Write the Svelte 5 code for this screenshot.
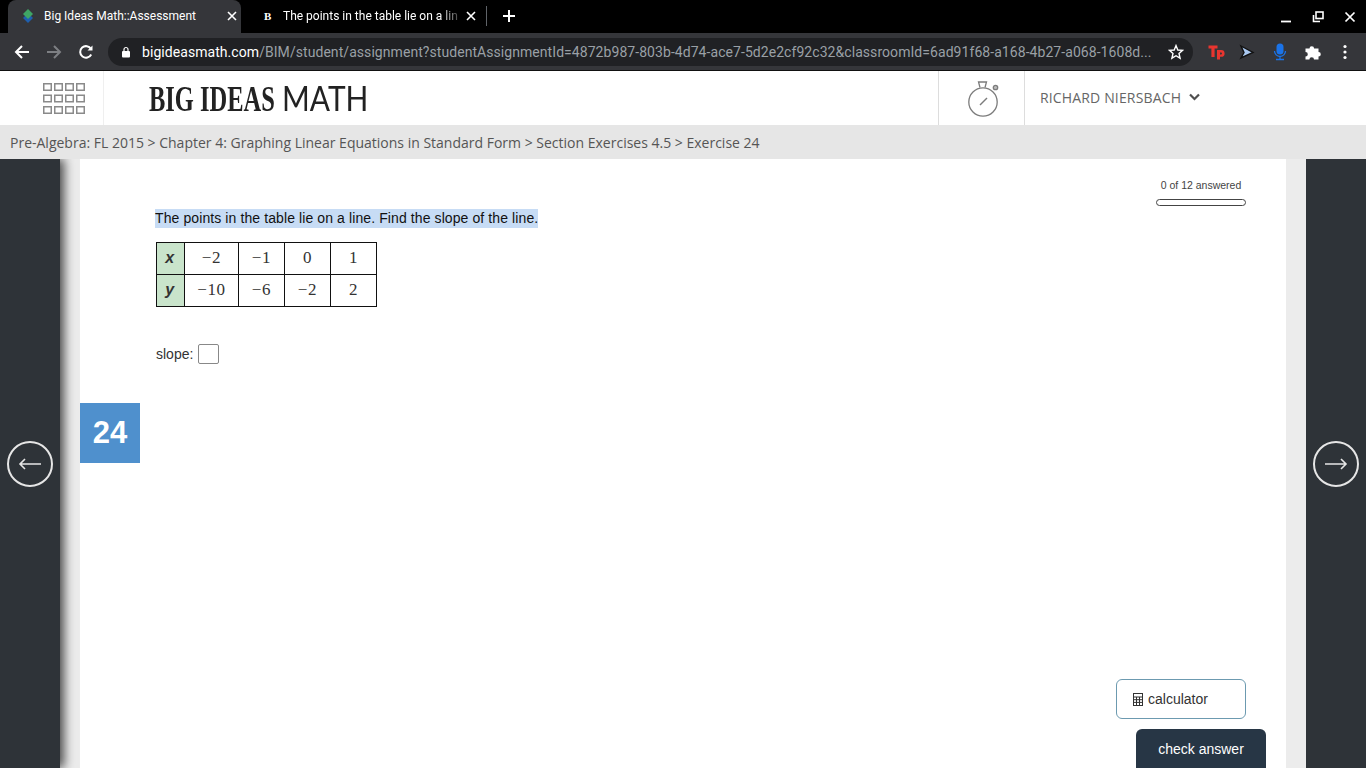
<script>
  const xs = ['−2', '−1', '0', '1'];
  const ys = ['−10', '−6', '−2', '2'];
  const squares = [];
  for (let r = 0; r < 3; r++) {
    for (let c = 0; c < 4; c++) squares.push({ x: 0.75 + c * 11, y: 0.75 + r * 11.5 });
  }
</script>

<div class="chrome">
  <div class="tabstrip">
    <div class="tab active">
      <svg class="favicon" width="16" height="16" viewBox="0 0 16 16">
        <path d="M8 5 L13 10 L8 15 L3 10Z" fill="#1f5fae" />
        <path d="M8 1 L13 6 L8 11 L3 6Z" fill="#3fa565" />
      </svg>
      <span class="tabtitle">Big Ideas Math::Assessment</span>
      <svg class="tabx" width="10" height="10" viewBox="0 0 10 10"><path d="M1 1 L9 9 M9 1 L1 9" stroke="#fff" stroke-width="1.6" /></svg>
    </div>
    <div class="tab second">
      <span class="bee">B</span>
      <span class="tabtitle fade">The points in the table lie on a lin</span>
      <svg class="tabx" width="10" height="10" viewBox="0 0 10 10"><path d="M1 1 L9 9 M9 1 L1 9" stroke="#fff" stroke-width="1.6" /></svg>
    </div>
    <div class="tabdiv"></div>
    <svg class="plus" width="12" height="12" viewBox="0 0 12 12"><path d="M6 0 V12 M0 6 H12" stroke="#fff" stroke-width="2" /></svg>
    <div class="winctl">
      <svg width="12" height="12" viewBox="0 0 12 12"><path d="M1 10.5 H11" stroke="#fff" stroke-width="1.8" /></svg>
      <svg width="12" height="12" viewBox="0 0 12 12" fill="none" stroke="#fff" stroke-width="1.6"><rect x="4" y="1" width="7" height="6.5" /><path d="M1.5 4 V10.5 H8" /></svg>
      <svg width="12" height="12" viewBox="0 0 12 12"><path d="M1.5 1.5 L10.5 10.5 M10.5 1.5 L1.5 10.5" stroke="#fff" stroke-width="1.7" /></svg>
    </div>
  </div>
  <div class="toolbar">
    <svg class="navbtn" width="16" height="16" viewBox="0 0 16 16" fill="none" stroke="#fff" stroke-width="2"><path d="M15 8 H2 M8 2 L2 8 L8 14" /></svg>
    <svg class="navbtn" width="16" height="16" viewBox="0 0 16 16" fill="none" stroke="#7d7f83" stroke-width="2"><path d="M1 8 H14 M8 2 L14 8 L8 14" /></svg>
    <svg class="navbtn" width="16" height="16" viewBox="0 0 16 16" fill="none" stroke="#fff" stroke-width="2"><path d="M13.2 10.5 A5.8 5.8 0 1 1 13 5" /><path d="M14.5 1.5 V6.5 H9.5 Z" fill="#fff" stroke="none" /></svg>
    <div class="omnibox">
      <svg width="10" height="12" viewBox="0 0 10 12"><rect x="1" y="5" width="8" height="6.5" rx="1" fill="#fff" /><path d="M3 5 V3.5 a2 2 0 0 1 4 0 V5" fill="none" stroke="#fff" stroke-width="1.2" /></svg>
      <span class="url"><b>bigideasmath.com</b>/BIM/student/assignment?studentAssignmentId=4872b987-803b-4d74-ace7-5d2e2cf92c32&amp;classroomId=6ad91f68-a168-4b27-a068-1608d...</span>
      <svg class="star" width="16" height="16" viewBox="0 0 16 16"><path d="M8 1.6 L9.8 6 L14.6 6.4 L11 9.5 L12.1 14.2 L8 11.7 L3.9 14.2 L5 9.5 L1.4 6.4 L6.2 6Z" fill="none" stroke="#fff" stroke-width="1.4" /></svg>
    </div>
    <div class="exts">
      <svg width="18" height="16" viewBox="0 0 18 16"><path d="M0.5 1.5 H9.5 V4.5 H6.6 V13 H3.4 V4.5 H0.5Z" fill="#e8352f" /><path d="M9 6 H13.2 a3.4 3.4 0 0 1 0 6.8 H12 V15.5 H9Z M12 8.4 V10.4 H13 a1 1 0 0 0 0-2Z" fill="#e8352f" fill-rule="evenodd" /></svg>
      <svg class="cursor" width="16" height="16" viewBox="0 0 16 16"><path d="M2 2 L14 8.5 L2 14 L5 8.5Z" fill="#a9c8f0" stroke="#111" stroke-width="1.4" /></svg>
      <svg width="16" height="18" viewBox="0 0 16 18"><rect x="4.5" y="0.5" width="7" height="11" rx="3.5" fill="#1a73e8" /><path d="M2.5 8 a5.5 5.5 0 0 0 11 0 M8 13.5 V16 M4 16.5 H12" fill="none" stroke="#1a73e8" stroke-width="1.3" /></svg>
      <svg width="16" height="16" viewBox="0 0 16 16"><path d="M0.5 4.5 H4.5 a2.3 2.3 0 1 1 4.6 0 H13.5 V8 a2.3 2.3 0 1 1 0 4.6 V15.5 H9 a2.3 2.3 0 1 0-4.6 0 H0.5 V12.5 a2.3 2.3 0 1 0 0-4.6Z" fill="#fff" /></svg>
      <svg class="dots" width="4" height="16" viewBox="0 0 4 16"><circle cx="2" cy="2.5" r="1.6" fill="#fff" /><circle cx="2" cy="8" r="1.6" fill="#fff" /><circle cx="2" cy="13.5" r="1.6" fill="#fff" /></svg>
    </div>
  </div>
</div>

<header class="site">
  <div class="apps">
    <svg width="43" height="31" viewBox="0 0 43 31" fill="none" stroke="#8a8a8a" stroke-width="1.5">
      {#each squares as s}
        <rect x={s.x} y={s.y} width="7.5" height="6.5" />
      {/each}
    </svg>
  </div>
  <div class="logo"><span class="big">BIG IDEAS</span><span class="math">MATH</span></div>
  <div class="timer">
    <svg width="34" height="38" viewBox="0 0 34 38" fill="none" stroke="#7c7c7c" stroke-width="1.3">
      <circle cx="16" cy="22" r="14.2" />
      <path d="M13 7.5 L11.5 2 H19.5 L18 7.5" />
      <circle cx="28.5" cy="7.5" r="2.2" fill="#bbb" />
      <path d="M13 25 L20 18" stroke-width="1.5" />
    </svg>
  </div>
  <div class="user">
    <span>RICHARD NIERSBACH</span>
    <svg width="11" height="8" viewBox="0 0 11 8"><path d="M1 1.5 L5.5 6 L10 1.5" fill="none" stroke="#4f4f4f" stroke-width="2.2" /></svg>
  </div>
</header>

<nav class="crumbs">Pre-Algebra: FL 2015 &gt; Chapter 4: Graphing Linear Equations in Standard Form &gt; Section Exercises 4.5 &gt; Exercise 24</nav>

<main class="stage">
  <aside class="side left">
    <div class="circle">
      <svg width="24" height="14" viewBox="0 0 24 14" fill="none" stroke="#e6e6e6" stroke-width="1.6"><path d="M23 7 H2 M7 2 L2 7 L7 12" /></svg>
    </div>
  </aside>
  <section class="sheet">
    <div class="badge">24</div>
    <div class="progress">
      <span>0 of 12 answered</span>
      <div class="bar"></div>
    </div>
    <p class="question"><span>The points in the table lie on a line. Find the slope of the line.</span></p>
    <table>
      <tbody>
        <tr>
          <th>x</th>
          {#each xs as v}<td>{v}</td>{/each}
        </tr>
        <tr>
          <th>y</th>
          {#each ys as v}<td>{v}</td>{/each}
        </tr>
      </tbody>
    </table>
    <div class="answer">slope: <span class="box"></span></div>
    <div class="actions">
      <button class="calc">
        <svg width="10" height="13" viewBox="0 0 10 13" fill="none" stroke="#333" stroke-width="1"><rect x="0.5" y="0.5" width="9" height="12" /><path d="M0.5 4 H9.5 M0.5 6.7 H9.5 M0.5 9.4 H9.5 M3.5 4 V12.5 M6.5 4 V12.5" /></svg>
        calculator
      </button>
      <button class="check">check answer</button>
    </div>
  </section>
  <aside class="side right">
    <div class="circle">
      <svg width="24" height="14" viewBox="0 0 24 14" fill="none" stroke="#e6e6e6" stroke-width="1.6"><path d="M1 7 H22 M17 2 L22 7 L17 12" /></svg>
    </div>
  </aside>
</main>

<style>
  :global(body) {
    margin: 0;
    height: 768px;
    overflow: hidden;
    background: #fff;
    font-family: "Liberation Sans", Arial, sans-serif;
  }

  .chrome {
    font-family: Roboto, sans-serif;
    color: #fff;
  }

  .tabstrip {
    height: 33px;
    background: #000;
    display: flex;
    align-items: flex-end;
    padding-left: 8px;
  }

  .tab {
    height: 33px;
    display: flex;
    align-items: center;
    font-size: 12px;
    box-sizing: border-box;
  }

  .tab.active {
    width: 233px;
    background: #35363a;
    border-radius: 8px 8px 0 0;
    padding: 0 0 2px 12px;
  }

  .tab.second {
    width: 245px;
    padding: 0 6px 2px 23px;
  }

  .favicon {
    flex: none;
    margin-right: 8px;
  }

  .tabtitle {
    flex: 1;
    white-space: nowrap;
    overflow: hidden;
    margin-right: 8px;
  }

  .fade {
    margin-right: 5px;
    -webkit-mask-image: linear-gradient(to right, #000 88%, rgba(0, 0, 0, 0.15) 100%);
    mask-image: linear-gradient(to right, #000 88%, rgba(0, 0, 0, 0.15) 100%);
  }

  .bee {
    flex: none;
    width: 19px;
    font: bold 11px "Liberation Serif", serif;
  }

  .tabx {
    flex: none;
    margin-right: 4px;
  }

  .tabdiv {
    width: 1px;
    height: 20px;
    background: #5f6368;
    margin: 0 0 7px 0;
  }

  .plus {
    margin: 0 0 11px 16px;
  }

  .winctl {
    margin-left: auto;
    align-self: stretch;
    display: flex;
    align-items: center;
    gap: 20px;
    padding: 0 10px 0 0;
    box-sizing: border-box;
  }

  .toolbar {
    height: 37px;
    background: #35363a;
    display: flex;
    align-items: center;
    padding-left: 14px;
    box-sizing: border-box;
  }

  .navbtn {
    flex: none;
    margin-right: 16px;
  }

  .omnibox {
    width: 1085px;
    height: 28px;
    flex: none;
    margin-left: -2px;
    box-sizing: border-box;
    background: #202124;
    border-radius: 14px;
    display: flex;
    align-items: center;
    padding: 0 9px 0 13px;
  }

  .url {
    flex: 1;
    margin-left: 11px;
    font-size: 14px;
    letter-spacing: 0.06px;
    color: #9aa0a6;
    white-space: nowrap;
    overflow: hidden;
  }

  .url b {
    font-weight: 400;
    color: #fff;
  }

  .star {
    flex: none;
    margin-left: 16px;
  }

  .exts {
    display: flex;
    align-items: center;
    gap: 17px;
    margin-left: 15px;
  }

  .cursor {
    margin-left: -4px;
  }

  .dots {
    margin-left: 5px;
  }

  .site {
    height: 55px;
    border-top: 1px solid #111;
    box-sizing: border-box;
    display: flex;
    align-items: stretch;
    background: #fff;
  }

  .apps {
    width: 104px;
    flex: none;
    box-sizing: border-box;
    border-right: 1px solid #efefef;
    padding: 12px 0 0 43px;
  }

  .logo {
    flex: none;
    width: 834px;
    box-sizing: border-box;
    padding: 9px 0 0 45px;
    display: flex;
    align-items: baseline;
    color: #222;
    white-space: nowrap;
    line-height: 36px;
  }

  .big {
    font: 700 36px/36px "Liberation Serif", serif;
    display: inline-block;
    width: 138px;
    transform: scaleX(0.68);
    transform-origin: left;
  }

  .math {
    font: 400 34px/36px Lato, sans-serif;
    display: inline-block;
    margin-left: -5px;
    transform: scaleX(0.88);
    transform-origin: left;
  }

  .timer {
    width: 87px;
    flex: none;
    box-sizing: border-box;
    border-left: 1px solid #ddd;
    border-right: 1px solid #ddd;
    padding: 9px 0 0 28px;
  }

  .user {
    padding: 0 0 2px 15px;
    display: flex;
    align-items: center;
    gap: 8px;
    font: 400 14px "Open Sans", sans-serif;
    letter-spacing: 0.15px;
    color: #666;
  }

  .crumbs {
    height: 34px;
    background: #e6e6e6;
    padding-left: 10px;
    font: 400 14px/35px "Open Sans", sans-serif;
    color: #555;
    white-space: nowrap;
  }

  .stage {
    height: 609px;
    display: flex;
    overflow: hidden;
    background: #ececec;
  }

  .side {
    flex: none;
    width: 60px;
    background: #2e3338;
    display: flex;
    align-items: center;
    justify-content: center;
  }

  .side.left {
    box-shadow: 4px 0 10px rgba(0, 0, 0, 0.7);
    margin-right: 20px;
  }

  .side.right {
    margin-left: 20px;
  }

  .circle {
    width: 46px;
    height: 46px;
    box-sizing: border-box;
    border: 2px solid #e6e6e6;
    border-radius: 50%;
    display: flex;
    align-items: center;
    justify-content: center;
    margin-top: 1px;
  }

  .sheet {
    flex: 1;
    position: relative;
    z-index: 1;
    background: #fff;
    display: flex;
    flex-direction: column;
    align-items: flex-start;
    padding: 20px 40px 0 75px;
    color: #222;
  }

  .badge {
    position: absolute;
    left: 0;
    top: 244px;
    width: 60px;
    height: 60px;
    background: #4f90cd;
    color: #fff;
    font: 700 31px/60px "Liberation Sans", sans-serif;
    text-align: center;
  }

  .progress {
    align-self: flex-end;
    width: 90px;
    font-size: 10.5px;
    line-height: 13px;
    color: #444;
    text-align: center;
    white-space: nowrap;
  }

  .bar {
    height: 7px;
    margin-top: 7px;
    border: 1px solid #444;
    border-radius: 4px;
    box-sizing: border-box;
  }

  .question {
    margin: 3px 0 0;
    font-size: 14px;
    line-height: 19px;
    letter-spacing: 0.1px;
    color: #111;
  }

  .question span {
    display: inline-block;
    background: #c7dcf5;
  }

  table {
    margin: 14px 0 0 1px;
    border-collapse: collapse;
    font: 400 17px "Liberation Serif", serif;
    letter-spacing: 0.6px;
    color: #333;
  }

  th, td {
    border: 1px solid #111;
    height: 32px;
    padding: 0 0 1px;
    box-sizing: border-box;
    text-align: center;
  }

  th {
    width: 28px;
    padding-right: 1px;
    background: #c9e4cb;
    font: italic 700 16px "Liberation Sans", sans-serif;
  }

  td {
    width: 46px;
  }

  td:nth-child(2) {
    width: 54px;
  }

  .answer {
    margin: 37px 0 0 1px;
    display: flex;
    align-items: center;
    gap: 5px;
    font-size: 14px;
    color: #333;
  }

  .box {
    width: 21px;
    height: 20px;
    box-sizing: border-box;
    border: 1px solid #888;
    border-radius: 2px;
  }

  .actions {
    margin-top: auto;
    align-self: flex-end;
    display: flex;
    flex-direction: column;
    align-items: flex-end;
    gap: 10px;
  }

  button {
    width: 130px;
    font: 400 14px "Liberation Sans", sans-serif;
    border-radius: 6px;
    box-sizing: border-box;
  }

  .calc {
    height: 40px;
    background: #fff;
    border: 1px solid #6c9ab0;
    color: #333;
    display: flex;
    align-items: center;
    gap: 5px;
    padding: 0 0 0 16px;
  }

  .check {
    height: 45px;
    margin-right: -20px;
    margin-bottom: -6px;
    background: #273645;
    border: 0;
    color: #fff;
    padding: 0 0 5px;
  }
</style>
